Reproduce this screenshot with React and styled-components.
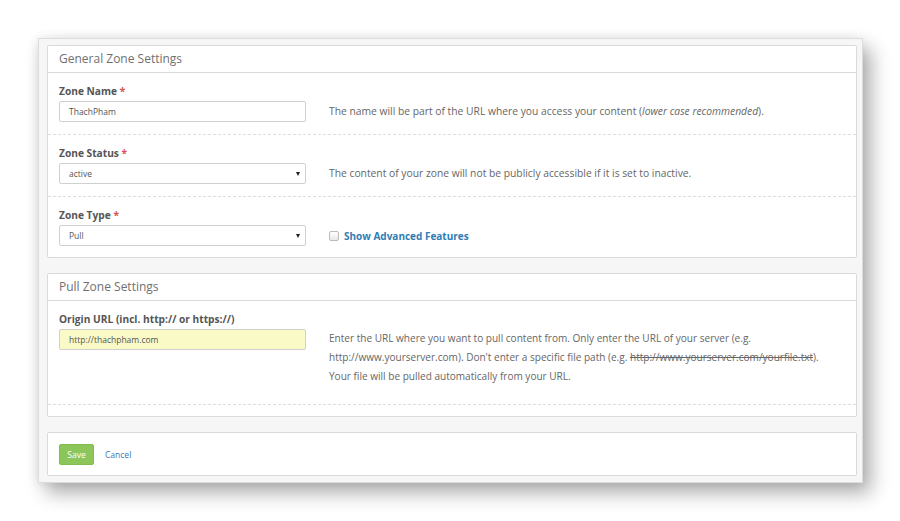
import React from "react";
import styled, { createGlobalStyle } from "styled-components";

const Global = createGlobalStyle`
  html, body { margin: 0; padding: 0; background: #fff; }
  body { font-family: "Open Sans", "Liberation Sans", sans-serif; color: #555; }
  * { box-sizing: border-box; }
`;

const Page = styled.div`
  width: 900px;
  height: 521px;
  padding: 38px 0 0 38px;
  background: #fff;
`;

const Window = styled.div`
  width: 825px;
  height: 445px;
  background: #f6f6f6;
  border: 1px solid #dcdcdc;
  box-shadow: 8px 10px 18px rgba(0, 0, 0, 0.32), -2px 0 10px rgba(0, 0, 0, 0.08);
  padding: 6px 5px 8px 8px;
  display: flex;
  flex-direction: column;
  gap: 15px;
`;

const Panel = styled.section`
  background: #fff;
  border: 1px solid #dadada;
  border-radius: 2px;
  padding-bottom: ${(p) => p.$bottom || 0}px;
`;

const PanelHeading = styled.div`
  height: 27px;
  padding: 0 11px 1px;
  display: flex;
  align-items: center;
  border-bottom: 1px solid #dadada;
  font-size: 12px;
  color: #707070;
`;

const Row = styled.div`
  display: grid;
  grid-template-columns: 247px 1fr;
  column-gap: 23px;
  padding: 10px 11px ${(p) => p.$pb || 12}px;
  border-bottom: ${(p) => (p.$last ? "none" : "1px dashed #dedede")};
`;

const Label = styled.label`
  grid-column: 1 / 3;
  font-size: 10.2px;
  font-weight: 700;
  color: #555;
  line-height: 17px;
  margin-bottom: 1px;
`;

const Star = styled.span`
  color: #d9534f;
`;

const Field = styled.div`
  height: 21px;
  border: 1px solid #d0d0d0;
  border-radius: 2px;
  background: ${(p) => (p.$hl ? "#fafac6" : "#fff")};
  padding: 0 9px;
  display: flex;
  align-items: center;
  justify-content: space-between;
  font-size: 8.5px;
  color: #555;
`;

const Arrow = styled.span`
  width: 0;
  height: 0;
  border-left: 2.5px solid transparent;
  border-right: 2.5px solid transparent;
  border-top: 4px solid #222;
  margin-right: -4px;
`;

const Help = styled.div`
  font-size: ${(p) => (p.$top ? "10.05px" : "10.3px")};
  color: #666;
  line-height: 19px;
  align-self: ${(p) => (p.$top ? "start" : "center")};
  white-space: ${(p) => (p.$top ? "nowrap" : "normal")};
`;

const Check = styled.div`
  align-self: center;
  display: flex;
  align-items: center;
  gap: 5px;
  font-size: 10px;
  font-weight: 700;
  color: #2f7db5;
`;

const Box = styled.span`
  width: 10px;
  height: 10px;
  border: 1px solid #bbb;
  border-radius: 2px;
  background: linear-gradient(#fff, #e8e8e8);
`;

const Strike = styled.span`
  text-decoration: line-through;
`;

const Actions = styled.div`
  display: flex;
  align-items: center;
  gap: 11px;
  padding: 11px 11px 10px;
`;

const SaveButton = styled.button`
  width: 35px;
  height: 21px;
  border: 1px solid #80bd4c;
  border-radius: 2px;
  background: #8cc65a;
  color: #fff;
  font-family: inherit;
  font-size: 8.5px;
  padding: 0;
`;

const CancelLink = styled.a`
  font-size: 8.5px;
  color: #3a78b5;
  text-decoration: none;
`;

export default function App() {
  return (
    <Page>
      <Global />
      <Window>
        <Panel>
          <PanelHeading>General Zone Settings</PanelHeading>
          <Row>
            <Label>
              Zone Name <Star>*</Star>
            </Label>
            <Field>ThachPham</Field>
            <Help>
              The name will be part of the URL where you access your content (<i>lower case recommended</i>).
            </Help>
          </Row>
          <Row>
            <Label>
              Zone Status <Star>*</Star>
            </Label>
            <Field>
              active<Arrow />
            </Field>
            <Help>The content of your zone will not be publicly accessible if it is set to inactive.</Help>
          </Row>
          <Row $last $pb={11}>
            <Label>
              Zone Type <Star>*</Star>
            </Label>
            <Field>
              Pull<Arrow />
            </Field>
            <Check>
              <Box />
              Show Advanced Features
            </Check>
          </Row>
        </Panel>
        <Panel $bottom={11}>
          <PanelHeading>Pull Zone Settings</PanelHeading>
          <Row $pb={18}>
            <Label>Origin URL (incl. http:// or https://)</Label>
            <Field $hl>http://thachpham.com</Field>
            <Help $top>
              Enter the URL where you want to pull content from. Only enter the URL of your server (e.g.
              <br />
              http://www.yourserver.com). Don't enter a specific file path (e.g.{" "}
              <Strike>http://www.yourserver.com/yourfile.txt</Strike>).
              <br />
              Your file will be pulled automatically from your URL.
            </Help>
          </Row>
        </Panel>
        <Panel>
          <Actions>
            <SaveButton>Save</SaveButton>
            <CancelLink href="#">Cancel</CancelLink>
          </Actions>
        </Panel>
      </Window>
    </Page>
  );
}
